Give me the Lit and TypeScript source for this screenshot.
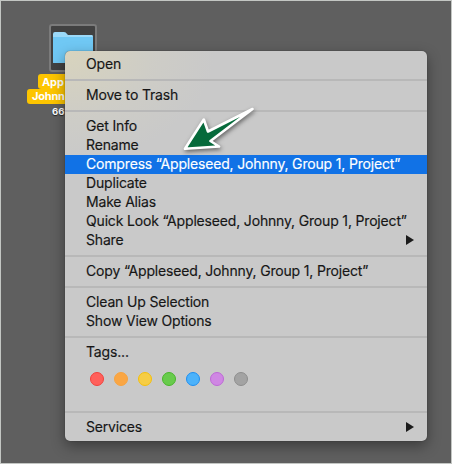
import { LitElement, html, css, svg } from "lit";
import { customElement } from "lit/decorators.js";

interface Item {
  label: string;
  active?: boolean;
  submenu?: boolean;
}

const GROUPS: Item[][] = [
  [{ label: "Open" }],
  [{ label: "Move to Trash" }],
  [
    { label: "Get Info" },
    { label: "Rename" },
    { label: "Compress “Appleseed, Johnny, Group 1, Project”", active: true },
    { label: "Duplicate" },
    { label: "Make Alias" },
    { label: "Quick Look “Appleseed, Johnny, Group 1, Project”" },
    { label: "Share", submenu: true },
  ],
  [{ label: "Copy “Appleseed, Johnny, Group 1, Project”" }],
  [{ label: "Clean Up Selection" }, { label: "Show View Options" }],
  [{ label: "Tags..." }],
  [{ label: "Services", submenu: true }],
];

const TAGS = [
  ["#ff605b", "#f0413c"],
  ["#faa644", "#f7a23e"],
  ["#f6cd45", "#f4bf0c"],
  ["#68cb4c", "#48b52b"],
  ["#4cb2fa", "#1e8ef0"],
  ["#cf87e3", "#bd68d5"],
  ["#a3a3a3", "#8d8d8d"],
];

@customElement("app-root")
export class AppRoot extends LitElement {
  static styles = css`
    :host {
      display: block;
      box-sizing: border-box;
      position: relative;
      width: 452px;
      height: 464px;
      overflow: hidden;
      background: #5f5f5f;
      border: 1px solid #c3c6c3;
      font-family: Inter, "Liberation Sans", sans-serif;
    }
    .file {
      position: absolute;
      left: 26px;
      top: 23px;
      width: 92px;
      display: flex;
      flex-direction: column;
      align-items: center;
      color: #fff;
      font-size: 11px;
      font-weight: 700;
      line-height: 15px;
    }
    .thumb {
      box-sizing: border-box;
      width: 48px;
      height: 48px;
      border: 2px solid #7b7b7b;
      border-radius: 3px;
      background: #414141;
      margin-bottom: 2px;
    }
    .thumb svg {
      display: block;
    }
    .name {
      background: #fdc500;
      border-radius: 3px;
      white-space: nowrap;
      box-sizing: border-box;
      padding-left: 4px;
    }
    .first {
      width: 70px;
      height: 15px;
      line-height: 17px;
      letter-spacing: -0.1px;
    }
    .second {
      width: 92px;
      height: 15px;
      padding-left: 5px;
      letter-spacing: -0.2px;
    }
    .count {
      font-size: 9.5px;
      line-height: 13px;
      width: 42px;
      margin-top: 1px;
      text-shadow: 0 1px 1px #222;
    }
    .menu {
      position: absolute;
      left: 64px;
      top: 50px;
      width: 362px;
      height: 390px;
      box-sizing: border-box;
      padding: 4px 0;
      border-radius: 5px;
      background:
        radial-gradient(ellipse 150px 110px at 0 0, rgba(218, 213, 188, 0.9), rgba(210, 208, 196, 0.5) 60%, rgba(201, 201, 201, 0)),
        #c9c9c9;
      box-shadow: 0 0 1px rgba(0, 0, 0, 0.6), 0 5px 14px rgba(0, 0, 0, 0.38);
    }
    .item {
      height: 19px;
      line-height: 17px;
      padding: 0 13px 0 21px;
      display: flex;
      align-items: flex-start;
      justify-content: space-between;
      font-size: 14px;
      letter-spacing: -0.17px;
      white-space: pre;
      color: #161616;
      -webkit-text-stroke: 0.15px currentColor;
    }
    .pointer {
      margin-top: 4px;
    }
    .active {
      background: #1172e6;
      color: #fff;
    }
    .rule {
      height: 2px;
      margin: 5px 0;
      background: #b8b8b8;
    }
    .tags {
      height: 44px;
      box-sizing: border-box;
      padding: 10px 0 0 25px;
      display: flex;
      gap: 10px;
    }
    .tag {
      width: 14px;
      height: 14px;
    }
    .arrow {
      position: absolute;
      left: 174px;
      top: 99px;
      filter: drop-shadow(1px 2px 2px rgba(0, 0, 0, 0.5));
    }
  `;

  private renderItem(item: Item) {
    return html`<div class="item ${item.active ? "active" : ""}">
      <span class="label">${item.label}</span>${item.submenu
        ? html`<svg class="pointer" width="9" height="10" viewBox="0 0 9 10"><path d="M1 0L9 5L1 10Z" fill="#1b1b1b" /></svg>`
        : ""}
    </div>`;
  }

  render() {
    return html`
      <div class="file">
        <div class="thumb">
          <svg width="44" height="44" viewBox="0 0 44 44">
            <path d="M2 8Q2 6 4 6H13Q15 6 16 8L17 9H41Q42 9 42 11V36Q42 37 41 37H3Q2 37 2 36Z" fill="#9bd9f8" />
            <path d="M2 11H42V36Q42 37 41 37H3Q2 37 2 36Z" fill="#70c8f4" />
          </svg>
        </div>
        <div class="name first">App</div>
        <div class="name second">Johnn</div>
        <div class="count">66</div>
      </div>
      <div class="menu">
        ${GROUPS.map(
          (group, i) => html`${i ? html`<div class="rule"></div>` : ""}${group.map((item) => this.renderItem(item))}
          ${i === 5
            ? html`<div class="tags">
                ${TAGS.map(
                  ([fill, line]) => html`<svg class="tag" viewBox="0 0 14 14">
                    ${svg`<circle cx="7" cy="7" r="6.5" fill=${fill} stroke=${line} />`}
                  </svg>`,
                )}
              </div>`
            : ""}`,
        )}
      </div>
      <svg class="arrow" width="90" height="60" viewBox="0 0 90 60">
        <path
          d="M10 48.8L28.8 19.5L33 31.5L77.5 9L35.5 41L44 46.5Z"
          fill="#066a3b"
          stroke="#fff"
          stroke-width="2.6"
          stroke-linejoin="round"
        />
      </svg>
    `;
  }
}
